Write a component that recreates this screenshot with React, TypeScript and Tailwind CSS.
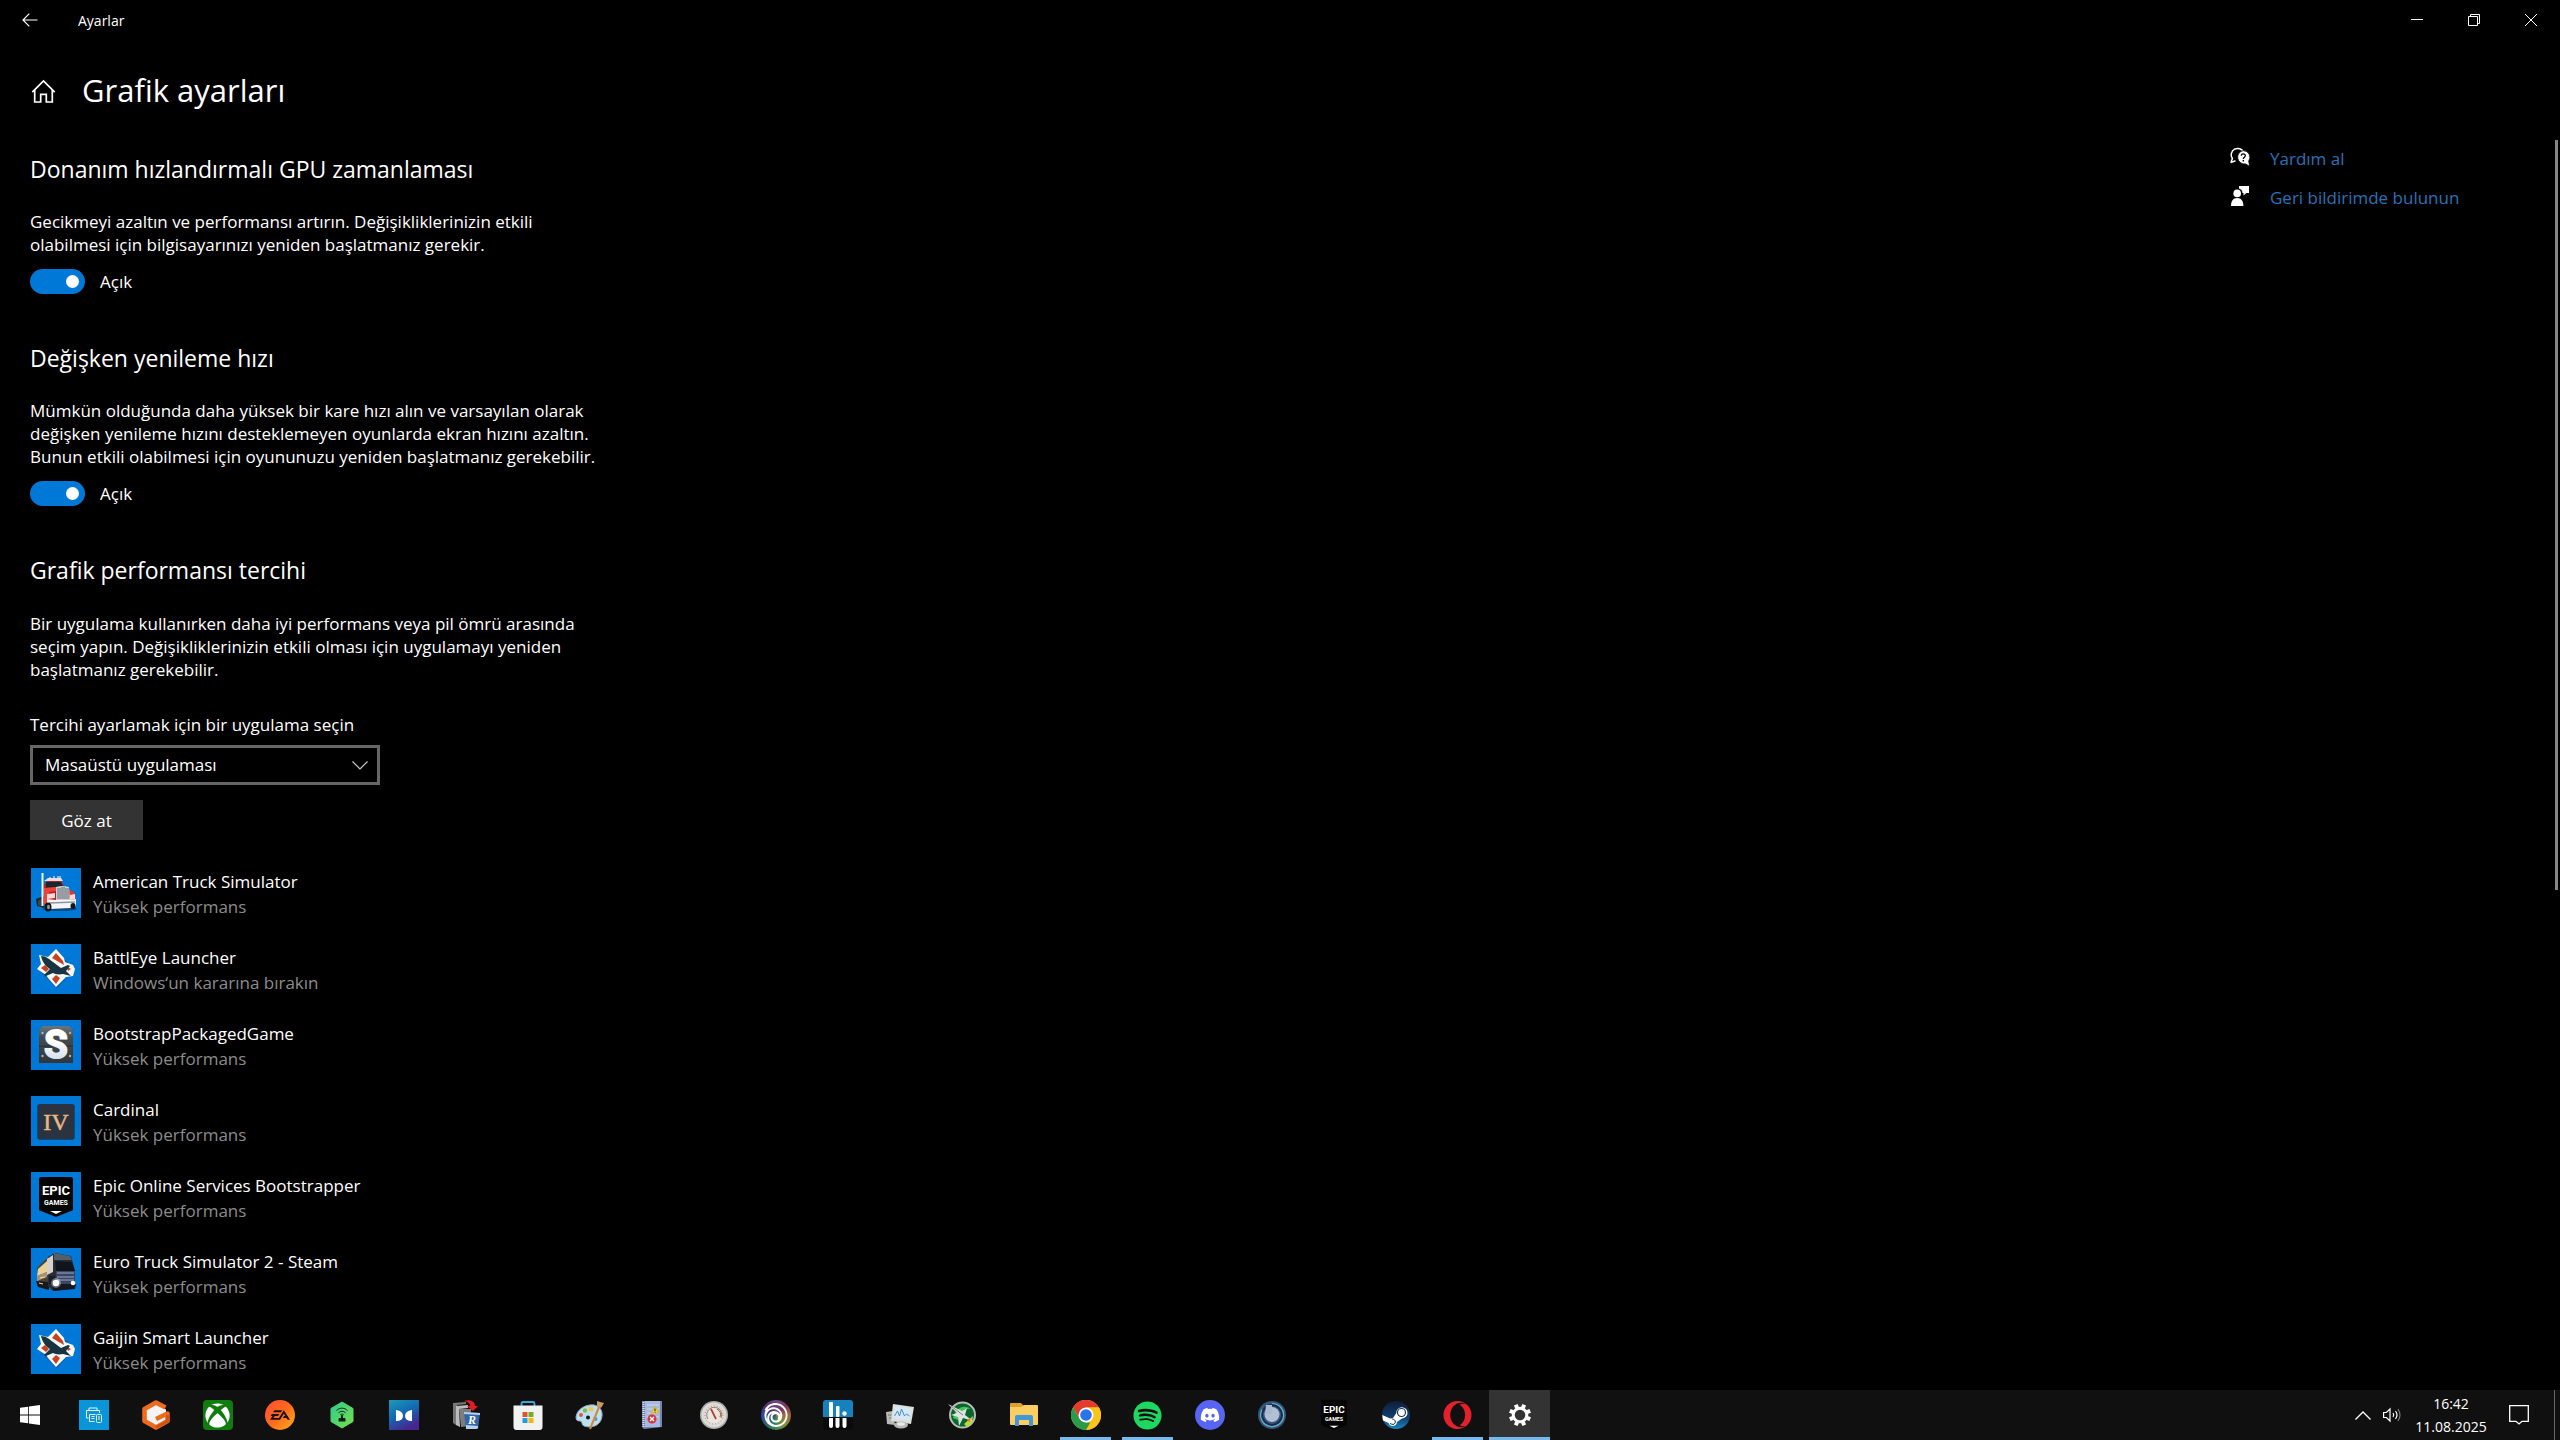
import { ReactNode, useState } from "react";
import { FaDiscord, FaOpera, FaSpotify, FaXbox } from "react-icons/fa";
import { SiEa, SiUbisoft } from "react-icons/si";

interface AppEntry {
  name: string;
  preference: string;
  icon: ReactNode;
}

interface TaskbarItem {
  label: string;
  icon: ReactNode;
  running?: boolean;
  active?: boolean;
}

/* ---------- window icons ---------- */

function BackIcon() {
  return (
    <svg width="16" height="14" viewBox="0 0 16 14" fill="none" stroke="#fff" strokeWidth="1.2">
      <path d="M15.5 7H1M7.3 .7 1 7l6.3 6.3" />
    </svg>
  );
}

function HomeIcon() {
  return (
    <svg width="26" height="26" viewBox="0 0 26 26" fill="none" stroke="#fff" strokeWidth="1.7">
      <path d="M2.300 15.200 13.500 4l11.200 11.200" />
      <path d="M4.700 13v12h6v-7.600h5.600V25h6V13" />
    </svg>
  );
}

function HelpIcon() {
  return (
    <svg width="20" height="20" viewBox="0 0 20 20">
      <path d="M.8 15.800 2.400 11.500A6.400 6.400 0 1 1 13.600 5.500M.8 15.600 5.500 13.800" fill="none" stroke="#fff" strokeWidth="1.500" />
      <path
        d="M13.300 3.600a6.700 6.700 0 0 1 5.400 10.500l1 5.300-4.200-2.500A6.700 6.700 0 1 1 13.300 3.600z"
        fill="#fff"
        stroke="#000"
        strokeWidth=".8"
      />
      <path d="M11.200 8.700c.2-2.500 4.200-2.300 4.100 0-.1 1.500-2 1.600-2 3.300" fill="none" stroke="#000" strokeWidth="1.300" />
      <rect x="12.600" y="13" width="1.400" height="1.500" fill="#000" />
    </svg>
  );
}

function FeedbackIcon() {
  return (
    <svg width="20" height="20" viewBox="0 0 20 20" fill="#fff">
      <path d="M9 0h10v7h-2.6l-2.9 2.4V7h-1A5 5 0 0 0 9 2.6z" />
      <circle cx="7.2" cy="7.4" r="3.8" />
      <path d="M1 20c0-5 2-8 6.2-8s6.2 3 6.2 8z" />
    </svg>
  );
}

/* ---------- application icons ---------- */

function RedTruck() {
  return (
    <svg width="50" height="50" viewBox="0 0 50 50">
      <ellipse cx="29" cy="41" rx="17" ry="2" fill="#0b4b84" />
      <path d="M5 31l8-3v12l-7-2z" fill="#20242a" />
      <path d="M13 17l3-4h14l5 8v14l-22 1z" fill="#b81e1e" />
      <path d="M15 14h15l2 5-17 1z" fill="#1d2630" />
      <path d="M13 13l4-3h13l2 3z" fill="#e8e0dc" />
      <path d="M13 20l12-1v4l-7 1-1 12h-4z" fill="#f14238" />
      <path d="M16 26l8-1v5l-8 1z" fill="#ffdbd8" />
      <path d="M37 21l6 3 2 7-6 1z" fill="#e3342f" />
      <path d="M39 27l5-1v5l-5 1z" fill="#ffd7cf" />
      <path d="M25 19q6-2 13 0l1 13H25z" fill="#c9cfd3" />
      <path d="M27 20v11M29 20v11M31 19v12M33 19v12M35 20v11M37 20v11" stroke="#5a6168" strokeWidth=".9" />
      <path d="M16 31l9 1h14l6-1v7l-6 2-20 1-3-4z" fill="#f5f5f5" />
      <path d="M18 35l26-1" stroke="#8c969e" strokeWidth="1.500" />
      <ellipse cx="17" cy="39" rx="3.500" ry="4.500" fill="#13171c" />
      <ellipse cx="17.500" cy="39" rx="1.500" ry="2.300" fill="#8c949c" />
      <ellipse cx="9" cy="35" rx="2" ry="3.500" fill="#3c444c" />
      <ellipse cx="42" cy="38" rx="2.500" ry="3" fill="#13171c" />
      <path d="M11.500 5v33" stroke="#f2f2f2" strokeWidth="2" />
      <path d="M19 11V9M23 10V8M27 10V8M29 8v4" stroke="#dde8f2" strokeWidth="1.200" />
    </svg>
  );
}

function BlueTruck() {
  return (
    <svg width="50" height="50" viewBox="0 0 50 50">
      <path d="M6 20l8-8 8-6v35l-14-5z" fill="#4b4132" />
      <path d="M7 21l9-8v11l-10 4z" fill="#e8d299" />
      <path d="M6 28l10-4v5L6 33z" fill="#a89474" />
      <path d="M5 33l13 1v8L7 39z" fill="#18191b" />
      <path d="M17 9l7-4 16 3 4 15v16l-22 4-5-5z" fill="#272d37" />
      <path d="M16 11l6-4v17l-6 3z" fill="#d6d2ca" />
      <path d="M23 5l16 3 2 4H23z" fill="#555e69" />
      <path d="M24 13l17 1 3 9H25z" fill="#10151d" />
      <path d="M25 23h19v13H25z" fill="#3a4560" />
      <path d="M26 25h17M26 29h17M26 32h17" stroke="#9aa9c9" />
      <path d="M20 36h25l-1 5-21 2z" fill="#141821" />
      <path d="M18 28h6v8h-6z" fill="#171c27" />
      <circle cx="25" cy="35" r="5" fill="#fff" opacity=".35" />
      <circle cx="25" cy="35" r="3.300" fill="#fff" />
      <circle cx="42" cy="35" r="2.300" fill="#fff" />
      <path d="M8 35l4 1M9 30l5-1" stroke="#f1dba4" />
    </svg>
  );
}

function PlaneBadge() {
  return (
    <svg width="50" height="50" viewBox="0 0 50 50">
      <path d="M26 7l17 18-17 19L7 25z" fill="#07457c" opacity=".55" />
      <path d="M25 5l8 9 1 4 8 3 2 4-2 7-7 1-10 10-8-9-2-3-9-6 4-5-2-9 9 2z" fill="#fafafa" />
      <path d="M25 9l7 8 1 4-12-7z" fill="#c8421f" />
      <path d="M10 24l4-3 4 4-3 3z" fill="#c8421f" />
      <path d="M25 31l4 3-4 6-4-5z" fill="#c8421f" />
      <path d="M35 22l5 3-3 2z" fill="#c8421f" />
      <path d="M10 12c5 0 8 3 12 6l8 6 7-3 2 1-4 5 5 5-8-2c-5 1-8 0-10-1l-7 3-2-1 6-6C14 22 11 17 10 12z" fill="#173440" />
    </svg>
  );
}

function MetalS() {
  return (
    <svg width="50" height="50" viewBox="0 0 50 50">
      <defs>
        <linearGradient id="metal" x2="0" y2="1">
          <stop stopColor="#6b777c" />
          <stop offset=".3" stopColor="#454c50" />
          <stop offset="1" stopColor="#30363a" />
        </linearGradient>
        <linearGradient id="letter" x2="0" y2="1">
          <stop offset=".4" stopColor="#fff" />
          <stop offset="1" stopColor="#c3d4e6" />
        </linearGradient>
      </defs>
      <path d="M12 6h26l4 4v33H8V10z" fill="url(#metal)" />
      <path d="M8 26h34" stroke="#262c30" />
      <g fill="#aab0b3">
        <circle cx="11.500" cy="13" r="1.200" />
        <circle cx="39" cy="13" r="1.200" />
        <circle cx="11.500" cy="36" r="1.200" />
        <circle cx="39" cy="36" r="1.200" />
      </g>
      <text
        x="25"
        y="38"
        textAnchor="middle"
        fontFamily="Roboto, sans-serif"
        fontWeight="700"
        fontSize="38"
        fill="url(#letter)"
        stroke="url(#letter)"
        strokeWidth="2"
      >
        S
      </text>
    </svg>
  );
}

function RomanFour() {
  return (
    <svg width="50" height="50" viewBox="0 0 50 50">
      <rect x="6" y="8" width="38" height="36" rx="3" fill="#0a4c82" />
      <rect x="7" y="8" width="36" height="35" rx="2" fill="#2b3340" />
      <text x="25" y="34" textAnchor="middle" fontFamily="Liberation Serif, serif" fontSize="24" fill="#e6b981" stroke="#e6b981" strokeWidth=".5">
        IV
      </text>
    </svg>
  );
}

function EpicShield({ size }: { size: number }) {
  return (
    <svg width={size} height={size} viewBox="0 0 50 50">
      <path d="M8 7c0-1 1-2 2-2h30c1 0 2 1 2 2v29c0 2 0 2-2 3l-15 6-15-6c-2-1-2-1-2-3z" fill="#050505" />
      <text x="25" y="23" textAnchor="middle" fontFamily="Roboto, sans-serif" fontWeight="700" fontSize="13" fill="#fff">
        EPIC
      </text>
      <text x="25" y="33" textAnchor="middle" fontFamily="Roboto, sans-serif" fontWeight="700" fontSize="7" fill="#fff">
        GAMES
      </text>
      <path d="M19 39h12l-6 3z" fill="#fff" />
    </svg>
  );
}

/* ---------- taskbar icons ---------- */

function WindowsLogo() {
  return (
    <svg width="20" height="20" viewBox="0 0 20 20" fill="#fff">
      <path d="M0 2.800 8.200 1.700v7.900H0zM9 1.600 20 0v9.600H9zM0 10.400h8.200v7.900L0 17.200zM9 10.400h11V20L9 18.400z" />
    </svg>
  );
}

function PrinterTile() {
  return (
    <svg width="30" height="30" viewBox="0 0 30 30" fill="none" stroke="#e5f4fb">
      <rect width="30" height="30" fill="#0b95d9" stroke="none" />
      <path d="M10 10V8h8v2M9.500 18H7.500v-7.500h13V13M10.500 21.500v-7h6M10.500 21.500h5M12.500 16.500h3M12.500 18.500h3" />
      <rect x="17.500" y="14.500" width="5" height="8" rx="1" />
      <path d="M19 17h2M19 19h2" />
    </svg>
  );
}

function OrangeG() {
  return (
    <svg width="30" height="30" viewBox="0 0 30 30">
      <path d="M15 4l10 5.500v11L15 27 5 20.500v-11z" fill="#f4f4f4" />
      <path d="M24.500 7.500 15 2.500 3.500 9v12L15 27.500 26.500 21v-7.500L15 19" fill="none" stroke="#ee6a1c" strokeWidth="4.600" strokeLinejoin="round" />
      <path d="M26.500 15v6L15 27.500" fill="none" stroke="#cf5410" strokeWidth="3" />
    </svg>
  );
}

function XboxTile() {
  return (
    <span className="flex size-[30px] items-center justify-center rounded-sm bg-[#107c10]">
      <FaXbox size={25} color="#fff" />
    </span>
  );
}

function EaTile() {
  return (
    <span className="flex size-[30px] items-center justify-center rounded-full bg-linear-to-br from-[#ff4b32] via-[#ff6a1c] to-[#ffae1a]">
      <SiEa size={20} color="#1d1011" />
    </span>
  );
}

function GreenHexagon() {
  return (
    <svg width="30" height="30" viewBox="0 0 30 30">
      <defs>
        <linearGradient id="hex" x2="1" y2="1">
          <stop stopColor="#2ecb8e" />
          <stop offset="1" stopColor="#77e04b" />
        </linearGradient>
      </defs>
      <path d="M15 2l11 6.500v13L15 28 4 21.500v-13z" fill="url(#hex)" stroke="url(#hex)" strokeLinejoin="round" />
      <path d="M9.500 10.500a7.500 7.500 0 0 1 11 0M11.500 12.700a5 5 0 0 1 7 0M13.300 14.700a2.400 2.400 0 0 1 3.400 0" fill="none" stroke="#12351f" />
      <path d="M14 15h2v3h2v2h-6v-2h2zM11.500 18.500h7v3h-7z" fill="#0d2014" />
    </svg>
  );
}

function BowTieTile() {
  return (
    <svg width="30" height="30" viewBox="0 0 30 30">
      <defs>
        <linearGradient id="bow" x2=".5" y2="1">
          <stop stopColor="#1d9bb5" />
          <stop offset=".5" stopColor="#126cb4" />
          <stop offset="1" stopColor="#46278f" />
        </linearGradient>
      </defs>
      <rect width="30" height="30" fill="url(#bow)" />
      <path d="M7 10q7 1 7 6t-7 5zM23 10q-7 1-7 6t7 5z" fill="#fff" />
    </svg>
  );
}

function UninstallerIcon() {
  return (
    <svg width="30" height="30" viewBox="0 0 30 30">
      <path d="M2 3l13-1v2L6 5v3l-1 17-3-2z" fill="#777" />
      <path d="M5 6l12-1v3L8 9l1 18-4-2z" fill="#bbb" />
      <path d="M8 9h12v17l-10 1z" fill="#7d7d7d" />
      <path d="M13 12l16 1-2 16H15z" fill="#3466ab" />
      <path d="M13 12l16 1v2l-16-1zM15 25l12 1v2l-2 1H15z" fill="#bad0e9" />
      <text x="21" y="24" textAnchor="middle" fontFamily="Liberation Serif, serif" fontStyle="italic" fontWeight="700" fontSize="12" fill="#fff">
        R
      </text>
      <path d="M13 1c7-2 11 1 11 5h3l-5 5-6-5h3c0-3-2-4-6-5z" fill="#e21b25" />
    </svg>
  );
}

function StoreIcon() {
  return (
    <svg width="30" height="30" viewBox="0 0 30 30">
      <path d="M8.500 8V3.500q0-1.500 1.500-1.500h10q1.500 0 1.500 1.500V8" fill="none" stroke="#35a9df" strokeWidth="1.800" />
      <path d="M.5 5.500h29V27q0 3-3 3h-23q-3 0-3-3z" fill="#f1f1f1" />
      <path d="M9.500 12h5v5h-5z" fill="#e3532b" />
      <path d="M15.500 12h5v5h-5z" fill="#73ad24" />
      <path d="M9.500 18h5v5h-5z" fill="#219ee3" />
      <path d="M15.500 18h5v5h-5z" fill="#efb51b" />
    </svg>
  );
}

function PaintIcon() {
  return (
    <svg width="30" height="30" viewBox="0 0 30 30">
      <path d="M1 17C2 9 11 4 19 5c7 1 10 8 7 15-3 7-11 8-17 6-3-1-1-5-4-5s-4-1-4-4z" fill="#bde0ef" stroke="#86aabd" />
      <circle cx="13" cy="17.500" r="2" fill="#161616" />
      <circle cx="6" cy="15" r="2" fill="#d9584b" />
      <circle cx="10" cy="10.500" r="2.300" fill="#84bd51" />
      <circle cx="16" cy="9" r="2.500" fill="#f0c94d" />
      <circle cx="20.500" cy="19" r="2" fill="#5a92d4" />
      <path d="M15 29 24 7" stroke="#d8843c" strokeWidth="2" />
      <path d="M22 1l3 1 4 1-3 5-4-2z" fill="#c99c61" />
    </svg>
  );
}

function NotebookIcon() {
  return (
    <svg width="30" height="30" viewBox="0 0 30 30">
      <path d="M5 1h20v26l-18 2-2-2z" fill="#7285b3" />
      <path d="M8 1h15v26H8z" fill="#a7b9dc" />
      <path d="M10 5h12M10 9h12M10 13h12M10 17h12" stroke="#cbd7ec" />
      <path d="M6.500 2v26" stroke="#d9e0ee" strokeDasharray="1 1" strokeWidth="2" />
      <path d="M18 6l4 7h-8z" fill="#f4d12c" stroke="#c1a21e" strokeWidth=".500" />
      <path d="M18 8.500v2.500M18 11.700v.8" stroke="#222" />
      <circle cx="15" cy="19" r="4.500" fill="#d8323a" />
      <path d="M13 17l4 4M17 17l-4 4" stroke="#fff" strokeWidth="1.500" />
    </svg>
  );
}

function GaugeIcon() {
  return (
    <svg width="30" height="30" viewBox="0 0 30 30">
      <circle cx="15" cy="15" r="14" fill="#a9aaa8" />
      <circle cx="15" cy="15" r="12.500" fill="#dedbd7" />
      <circle cx="15" cy="15" r="9" fill="#e9e6e0" stroke="#918c86" strokeDasharray="1 2" />
      <path d="M9 19a7.500 7.500 0 1 1 13-1" fill="none" stroke="#8d7564" />
      <path d="M12 9l5 10" stroke="#b43b32" strokeWidth="1.700" />
      <path d="M18 9q5 3 3 8" fill="none" stroke="#b2533f" />
    </svg>
  );
}

function UbisoftTile() {
  return (
    <span className="flex size-[30px] items-center justify-center rounded-full bg-[conic-gradient(#6b4a86,#7d3358,#9f6839,#8a8a36,#3c8a56,#25686c,#3044a6,#59316c,#6b4a86)]">
      <SiUbisoft size={24} color="#fff" />
    </span>
  );
}

function EqualizerIcon() {
  return (
    <svg width="30" height="30" viewBox="0 0 30 30">
      <path d="M0 17V3q0-3 3-3h24q3 0 3 3v14z" fill="#1682bd" />
      <path d="M0 18h30v9q0 3-3 3H3q-3 0-3-3z" fill="#0a0a0b" />
      <g fill="#fff">
        <rect x="6" y="2" width="4" height="15" rx="1" />
        <rect x="13" y="6" width="3.500" height="11" rx="1" />
        <circle cx="21.500" cy="13.500" r="2.200" />
        <path d="M6 18h4v8q0 2-2 2t-2-2zM12.500 18h4v8q0 2-2 2t-2-2zM19.500 18h4v8q0 2-2 2t-2-2z" />
      </g>
    </svg>
  );
}

function MonitorIcon() {
  return (
    <svg width="30" height="30" viewBox="0 0 30 30">
      <path d="M1 12l7-1 2 14-8-1z" fill="#b9bab8" />
      <path d="M3 15h5M4 18h4" stroke="#777" />
      <path d="M8 4l21 3-3 17-20-3z" fill="#dcdedb" />
      <path d="M10 6l17 2.500-2.500 12L8 18z" fill="#d5e8f3" />
      <path d="M9.500 16l3-5 2 5 2-7 3 7 2-2 3 2" fill="none" stroke="#4b8bc8" />
      <ellipse cx="16" cy="25" rx="7" ry="3.500" fill="#b5b7b4" />
      <ellipse cx="16" cy="24" rx="4" ry="1.800" fill="#e8e9e7" />
    </svg>
  );
}

function JetIcon() {
  return (
    <svg width="30" height="30" viewBox="0 0 30 30">
      <circle cx="15.500" cy="15" r="12.500" fill="#0b652d" stroke="#b9bdb8" strokeWidth="2" />
      <path d="M6 18c3-10 10-14 18-9-8-1-12 4-13 11z" fill="#44c65a" />
      <path d="M17 24l9-8-1 7-5 4z" fill="#b8d936" />
      <path d="M1 4l14 7 5-3-2 7 8 6-10-3-4 8-1-9-7-2 6-2z" fill="#dfe3df" />
      <path d="M4 6l12 9" stroke="#7d8581" />
      <circle cx="22" cy="20" r="1.500" fill="#eb7a25" />
    </svg>
  );
}

function FolderIcon() {
  return (
    <svg width="30" height="30" viewBox="0 0 30 30">
      <path d="M1 4q0-1 1-1h10l3 3h13v18H1z" fill="#dca12b" />
      <path d="M1 7h11l3-2h13q1 0 1 1v18q0 1-1 1H2q-1 0-1-1z" fill="#fbce62" />
      <path d="M6 17q0-2 2-2h14q2 0 2 2v9h-4v-6H10v6H6z" fill="#4397d4" />
    </svg>
  );
}

function ChromeIcon() {
  return (
    <svg width="30" height="30" viewBox="0 0 30 30">
      <circle cx="15" cy="15" r="15" fill="#fbc41a" />
      <path d="M2 7.500a15 15 0 0 1 26 0H15l-6.500 11z" fill="#e33b2e" />
      <path d="M2 7.500 8.500 18.800 15 22.500h6.500L15 30A15 15 0 0 1 2 7.500z" fill="#2a9b4a" />
      <path d="M15 7.500h13A15 15 0 0 1 15 30l6.500-11.300z" fill="#fbc41a" />
      <circle cx="15" cy="15" r="7.500" fill="#fff" />
      <circle cx="15" cy="15" r="5.800" fill="#2b73e8" />
    </svg>
  );
}

function DiscordTile() {
  return (
    <span className="flex size-[30px] items-center justify-center rounded-full bg-[#5865f2]">
      <FaDiscord size={20} color="#fff" />
    </span>
  );
}

function DialIcon() {
  return (
    <svg width="30" height="30" viewBox="0 0 30 30">
      <circle cx="15" cy="15" r="14" fill="#37567d" />
      <circle cx="15" cy="15" r="10" fill="none" stroke="#172d49" strokeWidth="2" />
      <path d="M15 3.500A11.500 11.500 0 1 1 5 9.500" fill="none" stroke="#65b3cc" strokeWidth="1.200" />
      <circle cx="15" cy="14.500" r="7.500" fill="#b3bfd2" />
      <path d="M9 5h6v9H8z" fill="#a9b9ce" />
    </svg>
  );
}

function SteamIcon() {
  return (
    <svg width="30" height="30" viewBox="0 0 30 30">
      <defs>
        <linearGradient id="steam" x2="0" y2="1">
          <stop stopColor="#101b38" />
          <stop offset=".6" stopColor="#114071" />
          <stop offset="1" stopColor="#1c86bd" />
        </linearGradient>
      </defs>
      <circle cx="15" cy="15" r="14" fill="url(#steam)" />
      <path d="M1.200 15l8 3.400q1.500-.7 2.800-.4l3.300-5a5.600 5.600 0 1 1 5.700 5.400l-5 3.700A4.300 4.300 0 0 1 7.600 23L2 20.400z" fill="#fff" />
      <circle cx="20.500" cy="12.500" r="4" fill="#fff" stroke="#15365f" strokeWidth="1.200" />
      <path d="M9 23.500l2 .8a2.500 2.500 0 0 0 1.700-4.800l-2-.8" fill="none" stroke="#15365f" />
    </svg>
  );
}

function GearIcon() {
  return (
    <svg width="24" height="24" viewBox="0 0 24 24" fill="none" stroke="#fff">
      <circle cx="12" cy="12" r="6.800" strokeWidth="3" />
      <g strokeWidth="4">
        <path d="M12 1v3.500M12 19.500V23M1 12h3.500M19.500 12H23" transform="rotate(22.500 12 12)" />
        <path d="M12 1v3.500M12 19.500V23M1 12h3.500M19.500 12H23" transform="rotate(67.500 12 12)" />
      </g>
    </svg>
  );
}

const apps: AppEntry[] = [
  { name: "American Truck Simulator", preference: "Yüksek performans", icon: <RedTruck /> },
  { name: "BattlEye Launcher", preference: "Windows‘un kararına bırakın", icon: <PlaneBadge /> },
  { name: "BootstrapPackagedGame", preference: "Yüksek performans", icon: <MetalS /> },
  { name: "Cardinal", preference: "Yüksek performans", icon: <RomanFour /> },
  { name: "Epic Online Services Bootstrapper", preference: "Yüksek performans", icon: <EpicShield size={50} /> },
  { name: "Euro Truck Simulator 2 - Steam", preference: "Yüksek performans", icon: <BlueTruck /> },
  { name: "Gaijin Smart Launcher", preference: "Yüksek performans", icon: <PlaneBadge /> },
];

const taskbarItems: TaskbarItem[] = [
  { label: "HP Smart", icon: <PrinterTile /> },
  { label: "G", icon: <OrangeG /> },
  { label: "Xbox", icon: <XboxTile /> },
  { label: "EA", icon: <EaTile /> },
  { label: "VPN", icon: <GreenHexagon /> },
  { label: "Media", icon: <BowTieTile /> },
  { label: "Uninstaller", icon: <UninstallerIcon /> },
  { label: "Microsoft Store", icon: <StoreIcon /> },
  { label: "Paint", icon: <PaintIcon /> },
  { label: "Notebook", icon: <NotebookIcon /> },
  { label: "Gauge", icon: <GaugeIcon /> },
  { label: "Ubisoft Connect", icon: <UbisoftTile /> },
  { label: "Equalizer", icon: <EqualizerIcon /> },
  { label: "Monitor", icon: <MonitorIcon /> },
  { label: "Afterburner", icon: <JetIcon /> },
  { label: "Dosya Gezgini", icon: <FolderIcon /> },
  { label: "Chrome", icon: <ChromeIcon />, running: true },
  { label: "Spotify", icon: <FaSpotify size={29} color="#1ed760" />, running: true },
  { label: "Discord", icon: <DiscordTile /> },
  { label: "Dial", icon: <DialIcon /> },
  { label: "Epic Games", icon: <EpicShield size={38} /> },
  { label: "Steam", icon: <SteamIcon /> },
  { label: "Opera", icon: <FaOpera size={29} color="#e3202c" />, running: true },
  { label: "Ayarlar", icon: <GearIcon />, active: true },
];

function ToggleSection({ id, title, children }: { id: string; title: string; children: ReactNode }) {
  const [on, setOn] = useState(true);

  return (
    <section className="mb-12">
      <h2 className="text-[23px] leading-8">{title}</h2>
      <p className="mt-[25px] leading-[23px]">{children}</p>
      <div className="mt-[13px] flex h-[25px] items-center gap-[15px]">
        <input
          id={id}
          type="checkbox"
          role="switch"
          checked={on}
          onChange={() => setOn(!on)}
          className="flex h-[25px] w-[55px] appearance-none items-center rounded-full bg-[#333] px-[6px] before:size-[13px] before:rounded-full before:bg-white checked:justify-end checked:bg-[#0078d7]"
        />
        <label htmlFor={id}>{on ? "Açık" : "Kapalı"}</label>
      </div>
    </section>
  );
}

export default function App() {
  const [appType, setAppType] = useState("desktop");

  return (
    <div className="flex min-h-screen flex-col bg-black font-['Open_Sans',sans-serif] text-[17px] text-white">
      <header className="flex h-10 items-center justify-between">
        <div className="flex items-center gap-10 pl-[22px] text-[14px]">
          <button aria-label="Geri">
            <BackIcon />
          </button>
          <span>Ayarlar</span>
        </div>
        <div className="flex h-full pr-px">
          <button aria-label="Simge durumuna küçült" className="flex w-[57px] items-center justify-center">
            <svg width="12" height="12" viewBox="0 0 12 12" stroke="#fff">
              <path d="M0 5.500h12" />
            </svg>
          </button>
          <button aria-label="Önceki boyut" className="flex w-[57px] items-center justify-center">
            <svg width="12" height="12" viewBox="0 0 12 12" fill="none" stroke="#fff">
              <path d="M.5 2.500h9v9h-9zM2.500 2.500v-2h9v9h-2" />
            </svg>
          </button>
          <button aria-label="Kapat" className="flex w-[57px] items-center justify-center">
            <svg width="12" height="12" viewBox="0 0 12 12" stroke="#fff">
              <path d="M0 0l12 12M12 0 0 12" />
            </svg>
          </button>
        </div>
      </header>

      <main className="relative flex flex-1 justify-between">
        <div className="pl-[30px]">
          <div className="mt-[26px] mb-[39px] flex items-center gap-[26px]">
            <HomeIcon />
            <h1 className="text-[31px] leading-12">Grafik ayarları</h1>
          </div>

          <ToggleSection id="gpu" title="Donanım hızlandırmalı GPU zamanlaması">
            Gecikmeyi azaltın ve performansı artırın. Değişikliklerinizin etkili
            <br />
            olabilmesi için bilgisayarınızı yeniden başlatmanız gerekir.
          </ToggleSection>

          <ToggleSection id="vrr" title="Değişken yenileme hızı">
            Mümkün olduğunda daha yüksek bir kare hızı alın ve varsayılan olarak
            <br />
            değişken yenileme hızını desteklemeyen oyunlarda ekran hızını azaltın.
            <br />
            Bunun etkili olabilmesi için oyununuzu yeniden başlatmanız gerekebilir.
          </ToggleSection>

          <section>
            <h2 className="text-[23px] leading-8">Grafik performansı tercihi</h2>
            <p className="mt-[26px] leading-[23px]">
              Bir uygulama kullanırken daha iyi performans veya pil ömrü arasında
              <br />
              seçim yapın. Değişikliklerinizin etkili olması için uygulamayı yeniden
              <br />
              başlatmanız gerekebilir.
            </p>

            <label htmlFor="app-type" className="mt-8 block leading-[23px]">
              Tercihi ayarlamak için bir uygulama seçin
            </label>
            <div className="relative mt-[9px] w-[350px]">
              <select
                id="app-type"
                value={appType}
                onChange={(e) => setAppType(e.target.value)}
                className="h-10 w-full appearance-none border-3 border-[#666] bg-black px-3"
              >
                <option value="desktop">Masaüstü uygulaması</option>
                <option value="store">Microsoft Store uygulaması</option>
              </select>
              <svg className="pointer-events-none absolute top-4 right-3" width="16" height="9" viewBox="0 0 16 9" fill="none" stroke="#ccc" strokeWidth="1.2">
                <path d="M.5.5 8 8 15.500.5" />
              </svg>
            </div>
            <button className="mt-[15px] block h-10 w-[113px] bg-[#333] pt-0.5">Göz at</button>

            <ul className="mt-7 flex flex-col gap-[26px] pl-px">
              {apps.map((app) => (
                <li key={app.name} className="flex h-[50px] gap-3">
                  <span className="size-[50px] bg-[#0078d7]">{app.icon}</span>
                  <div className="pt-px leading-[25px]">
                    <p>{app.name}</p>
                    <p className="text-[#8c8c8c]">{app.preference}</p>
                  </div>
                </li>
              ))}
            </ul>
          </section>
        </div>

        <aside className="flex w-[330px] flex-col gap-4 pt-[107px] leading-[23px] text-[#2a72b8]">
          <a href="#help" className="flex gap-5">
            <HelpIcon />
            Yardım al
          </a>
          <a href="#feedback" className="flex gap-5">
            <FeedbackIcon />
            Geri bildirimde bulunun
          </a>
        </aside>

        <div className="absolute top-[100px] right-[2px] h-[750px] w-[3px] bg-[#858585]" />
      </main>

      <footer className="flex h-[50px] items-stretch justify-between bg-[#101010]">
        <nav className="flex gap-px">
          <button aria-label="Başlat" className="flex w-[62px] items-center pl-5">
            <WindowsLogo />
          </button>
          {taskbarItems.map((item) => (
            <button
              key={item.label}
              aria-label={item.label}
              className={`relative flex w-[61px] items-center justify-center ${item.active ? "bg-[#333]" : ""}`}
            >
              {item.icon}
              {item.running && <span className="absolute inset-x-[5px] bottom-0 h-[3px] bg-[#76b9ed]" />}
              {item.active && <span className="absolute inset-x-0 bottom-0 h-[3px] bg-[#76b9ed]" />}
            </button>
          ))}
        </nav>

        <div className="flex items-center">
          <button aria-label="Gizli simgeleri göster">
            <svg width="16" height="9" viewBox="0 0 16 9" fill="none" stroke="#fff" strokeWidth="1.3">
              <path d="M.5 8.500 8 1l7.500 7.500" />
            </svg>
          </button>
          <button aria-label="Ses" className="ml-3">
            <svg width="20" height="18" viewBox="0 0 20 18" fill="none" stroke="#fff" strokeWidth="1.200">
              <path d="M.6 6.500v5h2.800L7 15V3L3.400 6.500z" />
              <path d="M10 7q1.500 2 0 4M12.500 5q3 4 0 8" />
              <path d="M15 3q4 6 0 12" stroke="#777" />
            </svg>
          </button>
          <button className="mx-[10px] w-[76px] text-center text-[14px] leading-[23px]">
            <time className="block">16:42</time>
            <time className="block">11.08.2025</time>
          </button>
          <button aria-label="Bildirimler" className="mx-[10px]">
            <svg width="20" height="20" viewBox="0 0 20 20" fill="none" stroke="#fff" strokeWidth="1.300">
              <path d="M.7.7h18.600v15.600h-6.300L10 19l-3-2.700H.7z" />
            </svg>
          </button>
          <span className="ml-[15px] h-full w-[6px] border-l border-[#666]" />
        </div>
      </footer>
    </div>
  );
}
